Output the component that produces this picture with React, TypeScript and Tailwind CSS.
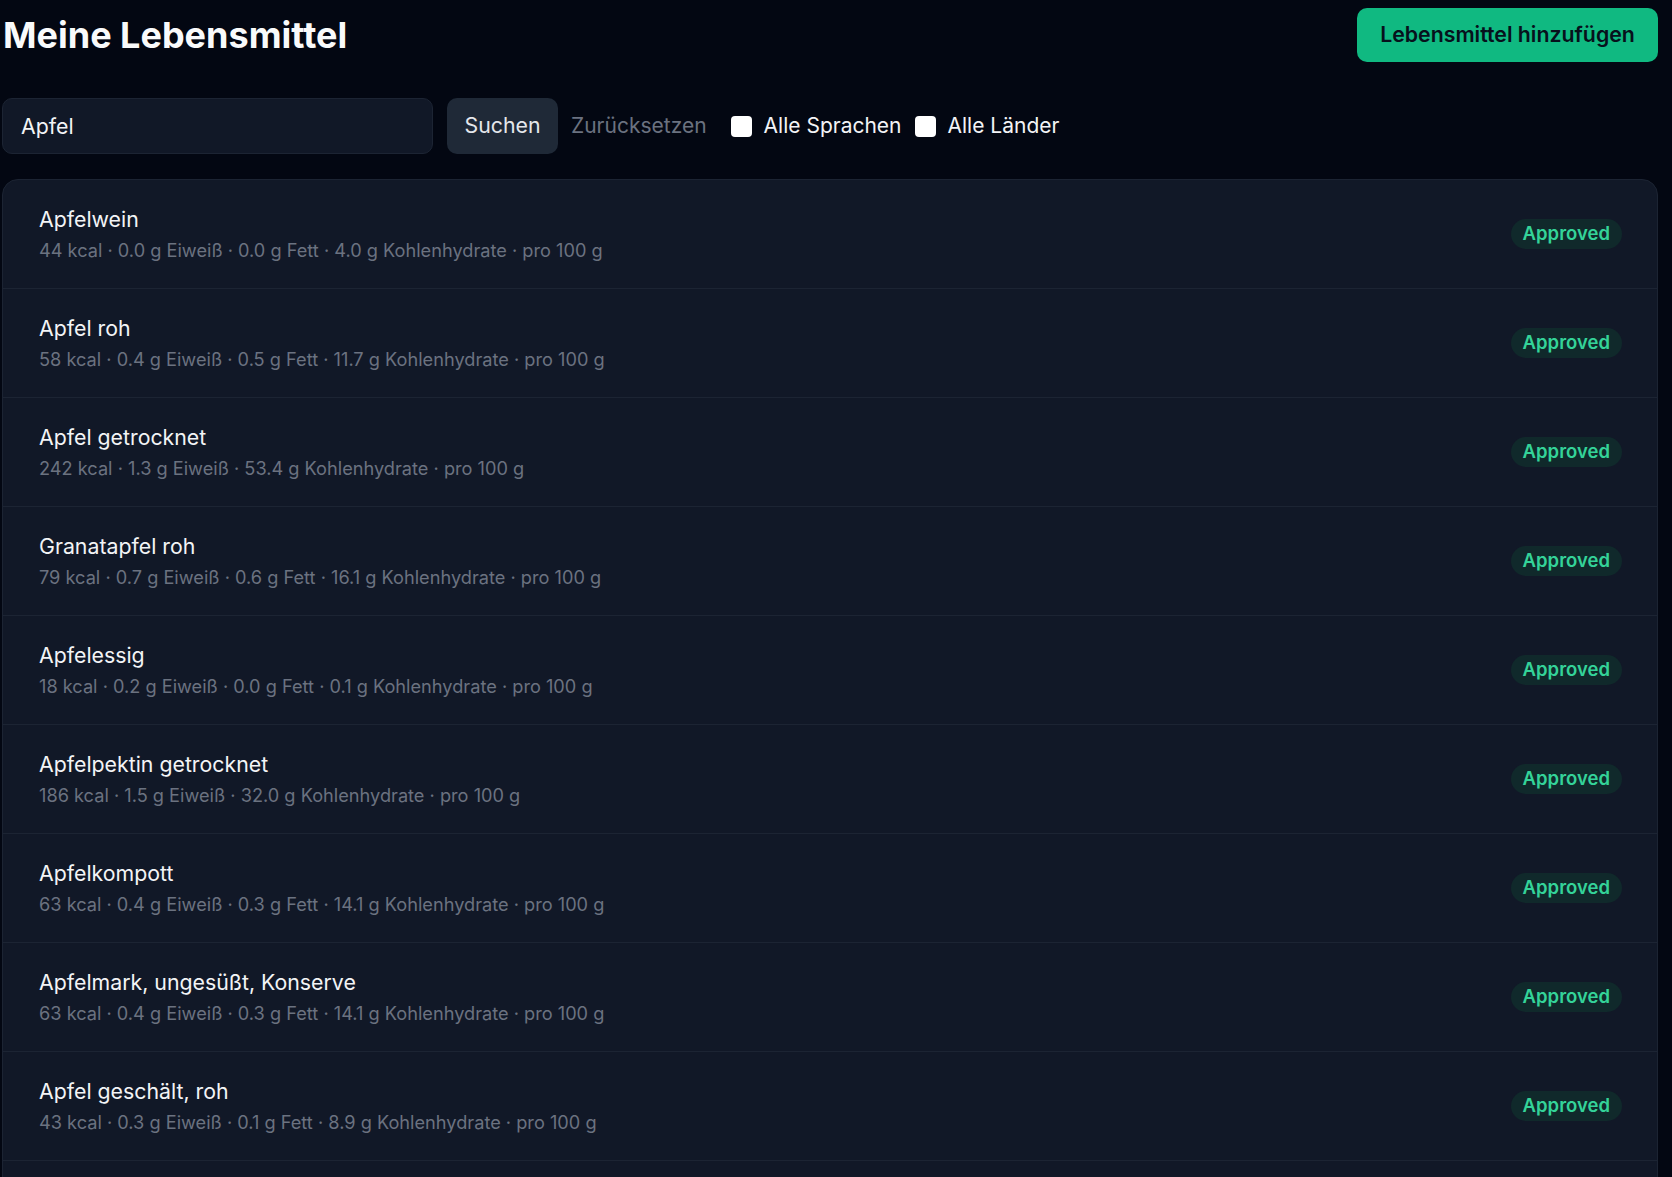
import React, { useState } from "react";

type Food = {
  name: string;
  kcal: number;
  protein: number;
  fat?: number;
  carbs: number;
  status: string;
};

const foods: Food[] = [
  { name: "Apfelwein", kcal: 44, protein: 0.0, fat: 0.0, carbs: 4.0, status: "Approved" },
  { name: "Apfel roh", kcal: 58, protein: 0.4, fat: 0.5, carbs: 11.7, status: "Approved" },
  { name: "Apfel getrocknet", kcal: 242, protein: 1.3, carbs: 53.4, status: "Approved" },
  { name: "Granatapfel roh", kcal: 79, protein: 0.7, fat: 0.6, carbs: 16.1, status: "Approved" },
  { name: "Apfelessig", kcal: 18, protein: 0.2, fat: 0.0, carbs: 0.1, status: "Approved" },
  { name: "Apfelpektin getrocknet", kcal: 186, protein: 1.5, carbs: 32.0, status: "Approved" },
  { name: "Apfelkompott", kcal: 63, protein: 0.4, fat: 0.3, carbs: 14.1, status: "Approved" },
  { name: "Apfelmark, ungesüßt, Konserve", kcal: 63, protein: 0.4, fat: 0.3, carbs: 14.1, status: "Approved" },
  { name: "Apfel geschält, roh", kcal: 43, protein: 0.3, fat: 0.1, carbs: 8.9, status: "Approved" },
  { name: "Apfelsaft", kcal: 46, protein: 0.1, fat: 0.1, carbs: 10.5, status: "Approved" },
];

const fmt = (n: number) => n.toFixed(1);

function macroLine(f: Food) {
  const parts = [`${f.kcal} kcal`, `${fmt(f.protein)} g Eiweiß`];
  if (f.fat !== undefined) parts.push(`${fmt(f.fat)} g Fett`);
  parts.push(`${fmt(f.carbs)} g Kohlenhydrate`, "pro 100 g");
  return parts.join(" · ");
}

function FoodRow({ food }: { food: Food }) {
  return (
    <div className="flex items-center justify-between border-b border-[#1c2433] pl-[36px] pr-[35px] pt-[25px] pb-[26px]">
      <div className="flex flex-col">
        <span className="text-[21.3px] leading-[28px] text-[#f3f4f6]">{food.name}</span>
        <span className="mt-[5px] text-[18.2px] leading-[24px] text-[#6b7280]">{macroLine(food)}</span>
      </div>
      <span className="flex h-[30px] items-center rounded-full bg-[#10292b] px-3 text-[18.5px] font-semibold text-[#34d399]">
        {food.status}
      </span>
    </div>
  );
}

export default function App() {
  const [query, setQuery] = useState("Apfel");
  const [allLang, setAllLang] = useState(false);
  const [allCountries, setAllCountries] = useState(false);

  return (
    <div className="min-h-screen bg-[#030712] font-['Inter',sans-serif] text-white">
      <div className="pl-[2px] pr-[14px]">
        <div className="flex items-start justify-between pt-2">
          <h1 className="pl-px pt-[5px] text-[36px] font-bold leading-[44px] text-[#f9fafb]">Meine Lebensmittel</h1>
          <button className="h-[54px] w-[301px] rounded-[10px] bg-[#10b981] text-[21.3px] font-semibold text-[#07111c]">
            Lebensmittel hinzufügen
          </button>
        </div>

        <div className="mt-9 flex items-center">
          <input
            value={query}
            onChange={(e) => setQuery(e.target.value)}
            className="h-[56px] w-[431px] rounded-[10px] border border-[#1c2433] bg-[#111827] px-[18px] text-[21.3px] text-[#f3f4f6] outline-none"
          />
          <button className="ml-[14px] h-[56px] w-[111px] rounded-[10px] bg-[#1f2937] text-[21.3px] text-[#e5e7eb]">
            Suchen
          </button>
          <button className="ml-[13px] text-[21px] text-[#6b7280]">Zurücksetzen</button>
          <label className="ml-[24px] flex items-center gap-3 text-[21px] text-[#f3f4f6]">
            <input
              type="checkbox"
              checked={allLang}
              onChange={(e) => setAllLang(e.target.checked)}
              className="h-[21px] w-[21px] appearance-none rounded-[4px] bg-white checked:bg-[#10b981]"
            />
            Alle Sprachen
          </label>
          <label className="ml-[13px] flex items-center gap-3 text-[21px] text-[#f3f4f6]">
            <input
              type="checkbox"
              checked={allCountries}
              onChange={(e) => setAllCountries(e.target.checked)}
              className="h-[21px] w-[21px] appearance-none rounded-[4px] bg-white checked:bg-[#10b981]"
            />
            Alle Länder
          </label>
        </div>

        <div className="mt-[25px] overflow-hidden rounded-2xl border border-[#1c2433] bg-[#111827]">
          {foods.map((f) => (
            <FoodRow key={f.name} food={f} />
          ))}
        </div>
      </div>
    </div>
  );
}
